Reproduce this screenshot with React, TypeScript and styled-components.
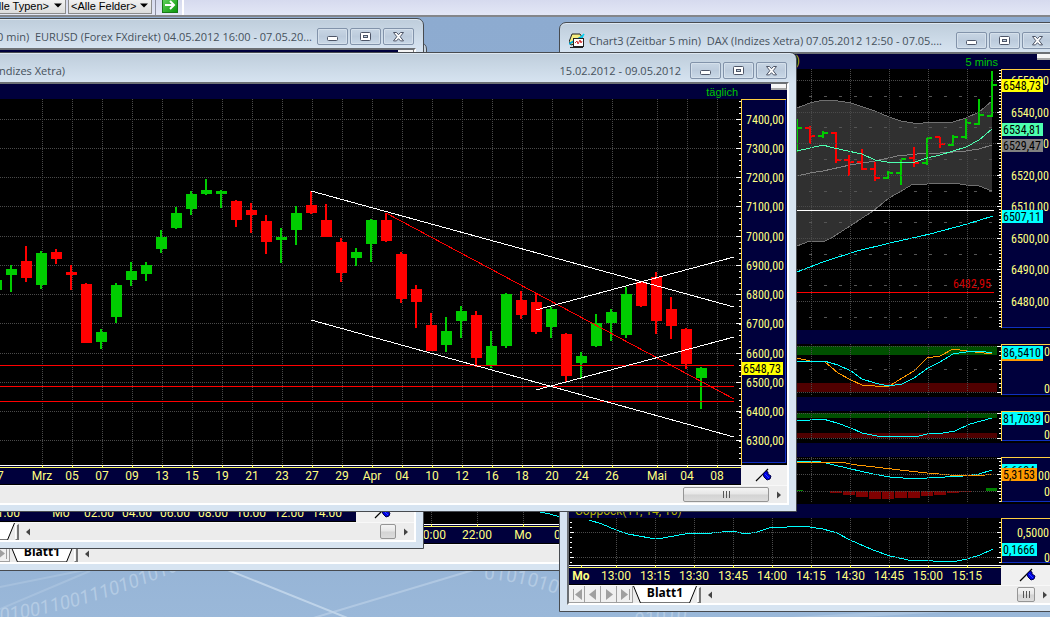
import React from 'react';
import styled, { createGlobalStyle } from 'styled-components';

const NAVY = '#00003c';
const GRID = '#4a4a4a';
const CYAN = '#00ffff';
const UP = '#00cc00';
const DOWN = '#ff0000';
const LABEL = '#ffff80';

const GlobalStyle = createGlobalStyle`
  * { box-sizing: border-box; }
  html, body { margin: 0; background: #94b2d4; }
  body, button, select { font-family: Roboto, "Liberation Sans", sans-serif; font-size: 12px; }
`;

const Page = styled.div`
  display: flex;
  flex-direction: column;
  min-height: 100vh;
  overflow: hidden;
`;

const Toolbar = styled.header`
  display: flex;
  height: 17px;
  flex: none;
  background: linear-gradient(#d6daee, #e3e7f6);
  border-bottom: 2px solid #84868a;
`;

const SelectBox = styled.label<{ $shift?: number }>`
  position: relative;
  display: block;
  height: 14px;
  width: 84px;
  margin-left: ${(p) => p.$shift ?? 2}px;
  svg { position: absolute; right: 4px; top: 3px; pointer-events: none; }
`;

const Select = styled.select`
  appearance: none;
  display: block;
  width: 100%;
  height: 14px;
  padding: 0 0 1px 2px;
  margin: 0;
  border: 1px solid #8c8c8c;
  border-top: 0;
  border-radius: 0;
  background: linear-gradient(#f2f2f2, #dcdcdc);
  color: #000;
  font: 11px/12px "Liberation Sans", sans-serif;
`;

const ToolbarEnd = styled.div`
  display: flex;
  margin-left: 3px;
  padding: 0 4px 0 6px;
  border-left: 1px solid #8c8ea0;
  border-right: 2px solid #fff;
  width: 29px;
`;

const GoButton = styled.button`
  width: 16px;
  height: 13px;
  padding: 0;
  border: 1px solid #187818;
  border-top: 0;
  background: linear-gradient(135deg, #5ed05a, #0c980c);
  svg { display: block; }
`;

const Desktop = styled.main`
  position: relative;
  flex: 1;
  overflow: hidden;
  background: linear-gradient(#8dabd0 0, #93b1d4 500px, #9ab8d9 600px);
`;

const Wallpaper = styled.svg`
  position: absolute;
  inset: 0;
  width: 100%;
  height: 100%;
`;

const Frame = styled.section<{ $x: number; $y: number; $w: number; $h: number }>`
  position: absolute;
  left: ${(p) => p.$x}px;
  top: ${(p) => p.$y}px;
  width: ${(p) => p.$w}px;
  height: ${(p) => p.$h}px;
  display: flex;
  flex-direction: column;
  padding: 0 7px 6px;
  border: 1px solid #474b50;
  border-radius: 7px 7px 0 0;
  background: linear-gradient(#becddb 0, #d7e4f1 30px);
  box-shadow: inset 0 1px 0 #dde7f0;
`;

const TitleBar = styled.div`
  display: flex;
  flex: none;
  align-items: center;
  height: 29px;
  padding: 9px 2px 3px;
  color: #46515c;
  font: 11px/17px "Open Sans", "Noto Sans", sans-serif;
  white-space: pre;
`;

const Title = styled.div<{ $end?: boolean }>`
  display: flex;
  flex: 1;
  gap: 4px;
  align-items: center;
  justify-content: ${(p) => (p.$end ? 'flex-end' : 'flex-start')};
  margin-right: 5px;
  min-width: 0;
`;

const TitleRow = styled(Title)`
  justify-content: space-between;
  margin-right: 9px;
`;

const TitleLead = styled.span`
  display: flex;
  justify-content: flex-end;
  width: 73px;
`;

const Controls = styled.div`
  display: flex;
  flex: none;
  gap: 2px;
`;

const Control = styled.button`
  display: flex;
  align-items: center;
  justify-content: center;
  width: 31px;
  height: 17px;
  padding: 0;
  border: 1px solid #8293aa;
  border-radius: 2px;
  background: linear-gradient(#c8d6e4, #bccbdc 50%, #c9d8e7);
  box-shadow: inset 0 0 0 1px #d5e0eb;
`;

const Client = styled.div`
  display: flex;
  flex: 1;
  flex-direction: column;
  min-height: 0;
  border: 2px solid;
  border-color: #6c7074 #fff #fff #6c7074;
  background: #000;
`;

const Strip = styled.div<{ $h: number }>`
  display: flex;
  flex: none;
  justify-content: space-between;
  height: ${(p) => p.$h}px;
  background: ${NAVY};
  color: #b4b400;
  font: 12px/${(p) => p.$h}px Roboto, "Liberation Sans", sans-serif;
  white-space: nowrap;
`;

const StripText = styled.span<{ $w?: number }>`
  padding-left: 6px;
  width: ${(p) => (p.$w ? `${p.$w}px` : 'auto')};
  text-align: ${(p) => (p.$w ? 'right' : 'left')};
`;

const Interval = styled.span`
  display: flex;
  margin-left: auto;
  color: #00c800;
  font: 11px/16px "Liberation Sans", sans-serif;
`;

const Corner = styled.span<{ $gap: number }>`
  width: 16px;
  height: 6px;
  margin-left: ${(p) => p.$gap}px;
  background: #f6f6f6;
  border-right: 1px solid #777;
  border-bottom: 2px solid #a8a8a8;
`;

const Row = styled.div<{ $h?: number }>`
  display: flex;
  flex: ${(p) => (p.$h ? 'none' : '1')};
  min-height: 0;
  height: ${(p) => (p.$h ? `${p.$h}px` : 'auto')};
  overflow: hidden;
  background: #000;
`;

const Canvas = styled.svg`
  display: block;
  flex: none;
  shape-rendering: crispEdges;
`;

const AxisText = styled.text`
  font-size: 12px;
  font-family: Roboto, "Liberation Sans", sans-serif;
`;

const PriceText = styled.text`
  font-size: 12px;
  font-family: "Liberation Sans Narrow", "Roboto Condensed", Roboto, sans-serif;
`;

const PinCell = styled.div`
  display: flex;
  flex: 1;
  align-items: center;
  padding-left: 14px;
  background: #f0f0f0;
`;

const PinCellWide = styled(PinCell)`
  padding-left: 18px;
`;

const BottomBar = styled.div`
  display: flex;
  flex: none;
  align-items: center;
  height: 18px;
  background: #ececec;
  border-top: 1px solid #f8f8f8;
`;

const NavGroup = styled.div`
  display: flex;
  align-self: stretch;
`;

const NavButton = styled.button`
  display: flex;
  align-items: center;
  justify-content: center;
  width: 16px;
  padding: 0;
  border: 0;
  border-right: 1px solid #a0a0a0;
  border-bottom: 1px solid #a0a0a0;
  background: #f0f0f0;
`;

const SheetTab = styled.button`
  display: flex;
  align-items: stretch;
  height: 17px;
  padding: 0;
  border: 0;
  background: none;
  font: bold 12px/14px "Open Sans", "Noto Sans", sans-serif;
  color: #000;
  svg { display: block; }
`;

const SheetName = styled.span`
  width: 48px;
  text-align: center;
  background: #fff;
  border-bottom: 1px solid #777;
`;

const Grip = styled.span`
  width: 4px;
  height: 16px;
  border: 1px solid #fff;
  border-right: 2px solid #777;
  border-bottom-color: #777;
  background: #f0f0f0;
`;

const ArrowButton = styled.button`
  display: flex;
  align-items: center;
  justify-content: center;
  width: 17px;
  height: 17px;
  padding: 0;
  border: 0;
  background: none;
`;

const Spacer = styled.span`
  flex: 1;
`;

const Thumb = styled.button<{ $w: number }>`
  display: flex;
  align-items: center;
  justify-content: center;
  width: ${(p) => p.$w}px;
  height: 15px;
  margin-right: 1px;
  padding: 0;
  border: 1px solid #959595;
  border-radius: 2px;
  background: linear-gradient(#f4f4f4, #e6e6e6 48%, #d3d3d3 52%, #dcdcdc);
`;

/* ---------- drawings ---------- */

const Pin = () => (
  <svg width="18" height="14" viewBox="0 0 18 14" aria-hidden="true">
    <path d="M1 13 L13 1" stroke="#000" strokeWidth="1.200" />
    <path d="M8 6 l3 -3 l2 1 l0 2 l3 2 l-1 3 l-3 1 l-3 -3 z" fill="#0000e0" stroke="#000048" strokeWidth="1" />
    <path d="M10 6 l4 4" stroke="#2a4cff" strokeWidth="1" />
  </svg>
);

const ChartIcon = () => (
  <svg width="16" height="16" viewBox="0 0 16 16" aria-hidden="true">
    <path d="M3 1 L11 1 L13 4 L13 8 L2 12 L0 9 Z" fill="#f4ec80" stroke="#222" />
    <path d="M0 11 L14 3" stroke="#00a8d8" strokeWidth="2" />
    <path d="M15 1 L12 5" stroke="#00d0f0" strokeWidth="1.6" />
    <rect x="4.500" y="5.500" width="10" height="8" fill="#fff" stroke="#222" />
    <path d="M6 10 l2 -2 l1 3 l2 -4 l1 3 l1 -2" stroke="#d03030" fill="none" />
    <path d="M1 14.500 h13" stroke="#222" />
  </svg>
);

const MinGlyph = () => (
  <svg width="13" height="12" viewBox="0 0 13 12" aria-hidden="true">
    <rect x="1.500" y="5.500" width="10" height="4" rx="1" fill="#fff" stroke="#4d5567" />
  </svg>
);
const MaxGlyph = () => (
  <svg width="13" height="12" viewBox="0 0 13 12" aria-hidden="true">
    <rect x="1.500" y="1.500" width="10" height="8" rx="1" fill="#fff" stroke="#4d5567" />
    <rect x="4.500" y="4.500" width="4" height="2" fill="#c3d1df" stroke="#4d5567" />
  </svg>
);
const CloseGlyph = () => (
  <svg width="13" height="12" viewBox="0 0 13 12" aria-hidden="true">
    <path d="M1.500 1.500 h3 l2 2.200 l2 -2.200 h3 l-3.300 4.200 l3.300 4.200 h-3 l-2 -2.200 l-2 2.200 h-3 l3.300 -4.200 z" fill="#fff" stroke="#4d5567" />
  </svg>
);

const WindowControls = () => (
  <Controls>
    <Control aria-label="Minimieren"><MinGlyph /></Control>
    <Control aria-label="Maximieren"><MaxGlyph /></Control>
    <Control aria-label="Schließen"><CloseGlyph /></Control>
  </Controls>
);

const NAV_ICONS = [
  'M3 1 h1 v11 h-1 z M12 1 v11 l-7 -5.500 z',
  'M10 1 v11 l-7 -5.500 z',
  'M4 1 v11 l7 -5.500 z',
  'M11 1 h1 v11 h-1 z M3 1 v11 l7 -5.500 z',
];
const NAV_NAMES = ['Erstes Blatt', 'Vorheriges Blatt', 'Nächstes Blatt', 'Letztes Blatt'];

const Arrow = ({ dir, label }: { dir: 'left' | 'right'; label: string }) => (
  <ArrowButton aria-label={label}>
    <svg width="4" height="8" viewBox="0 0 4 8" aria-hidden="true">
      <path d={dir === 'left' ? 'M4 0.500 v7 L0 4 z' : 'M0 0.500 v7 L4 4 z'} fill="#444" />
    </svg>
  </ArrowButton>
);

const ScrollEnd = ({ w, ridges }: { w: number; ridges?: boolean }) => (
  <>
    <Spacer />
    <Thumb $w={w} aria-label="Bildlauf">
      {ridges && (
        <svg width="9" height="7" aria-hidden="true">
          <path d="M1.500 0 v7 M4.500 0 v7 M7.500 0 v7" stroke="#555" />
        </svg>
      )}
    </Thumb>
    <Arrow dir="right" label="Nach rechts" />
  </>
);

const SheetBar = ({ thumb, ridges }: { thumb: number; ridges?: boolean }) => (
  <BottomBar>
    <NavGroup>
      {NAV_ICONS.map((d, i) => (
        <NavButton key={d} aria-label={NAV_NAMES[i]}>
          <svg width="14" height="13" viewBox="0 0 14 13" aria-hidden="true"><path d={d} fill="#a0a0a0" /></svg>
        </NavButton>
      ))}
    </NavGroup>
    <SheetTab>
      <svg width="8" height="17" aria-hidden="true">
        <path d="M0 0 H8 V17 Z" fill="#fff" />
        <path d="M0.500 0 L7.500 17" stroke="#000" />
      </svg>
      <SheetName>Blatt1</SheetName>
      <svg width="8" height="17" aria-hidden="true">
        <path d="M0 0 H8 L0 17 Z" fill="#fff" />
        <path d="M7.500 0 L0.500 17" stroke="#000" />
      </svg>
    </SheetTab>
    <Grip />
    <Arrow dir="left" label="Nach links" />
    <ScrollEnd w={thumb} ridges={ridges} />
  </BottomBar>
);

type TickLabel = [number, string, boolean?];

const TimeAxis = ({ x, w, ticks }: { x: number; w: number; ticks: TickLabel[] }) => (
  <Canvas width={w} height={20} viewBox={`${x} 0 ${w} 20`}>
    <rect x={x} y={0} width={w} height={19} fill={NAVY} />
    <rect x={x} y={0} width={w} height={1} fill="#fff" />
    <rect x={x} y={2} width={w} height={1} fill="#ffff60" />
    {ticks.map(([cx, text, bold]) => (
      <g key={cx}>
        <rect x={cx} y={0} width={1} height={3} fill="#ffff60" />
        <AxisText x={cx} y={15} textAnchor="middle" fill={LABEL} fontWeight={bold ? 700 : 400}>{text}</AxisText>
      </g>
    ))}
  </Canvas>
);

const Tag = ({ x, y, w, fill, text }: { x: number; y: number; w: number; fill: string; text: string }) => (
  <g>
    <rect x={x} y={y} width={w} height={13} fill={fill} />
    <PriceText x={x + 1} y={y + 11} fill="#000">{text}</PriceText>
  </g>
);

const HGrid = ({ x1, x2, ys }: { x1: number; x2: number; ys: number[] }) => (
  <path d={ys.map((y) => `M${x1} ${y + 0.5}H${x2}`).join('')} stroke={GRID} strokeDasharray="1 1" />
);
const VGrid = ({ xs, y1, y2 }: { xs: number[]; y1: number; y2: number }) => (
  <path d={xs.map((x) => `M${x + 0.5} ${y1}V${y2}`).join('')} stroke={GRID} strokeDasharray="1 1" />
);

/* ---------- daily chart ---------- */

const DAY_X = [42, 72, 102, 132, 162, 192, 222, 252, 282, 312, 342, 372, 402, 432, 462, 492, 522, 552, 582, 612, 657, 687, 717];
const DAY_NAMES = ['Mrz', '05', '07', '09', '13', '15', '19', '21', '23', '27', '29', 'Apr', '04', '10', '12', '16', '18', '20', '24', '26', 'Mai', '04', '08'];
const DAY_Y = [119, 148, 177, 206, 236, 265, 294, 323, 353, 382, 411, 440];

// [rising, body top, body bottom, wick top, wick bottom]
const CANDLES: [number, number, number, number, number][] = [
  [1, 280, 290, 280, 290], [1, 269, 275, 265, 292], [0, 261, 278, 246, 282], [1, 253, 285, 251, 289],
  [0, 252, 259, 249, 264], [0, 272, 275, 265, 290], [0, 284, 343, 283, 343], [1, 332, 342, 329, 349],
  [1, 285, 317, 283, 323], [1, 271, 280, 262, 286], [1, 265, 274, 262, 281], [1, 237, 249, 230, 253],
  [1, 213, 228, 207, 229], [1, 194, 209, 191, 215], [1, 190, 194, 179, 195], [1, 191, 194, 190, 208],
  [0, 201, 220, 200, 227], [0, 210, 215, 203, 233], [0, 221, 242, 215, 254], [1, 237, 240, 228, 263],
  [1, 213, 230, 206, 245], [0, 205, 213, 191, 214], [0, 220, 237, 204, 237], [0, 242, 273, 238, 282],
  [1, 252, 258, 248, 266], [1, 220, 244, 219, 262], [0, 220, 241, 213, 242], [0, 254, 299, 252, 303],
  [0, 289, 302, 285, 328], [0, 325, 351, 313, 351], [1, 331, 345, 317, 352], [1, 311, 321, 306, 338],
  [0, 315, 358, 311, 367], [1, 346, 365, 331, 368], [1, 294, 346, 293, 348], [0, 300, 315, 291, 319],
  [0, 302, 332, 293, 334], [1, 309, 327, 307, 338], [0, 334, 376, 333, 382], [1, 356, 363, 352, 379],
  [1, 323, 346, 314, 347], [1, 312, 323, 309, 341], [1, 294, 335, 287, 338], [0, 282, 306, 281, 307],
  [0, 277, 321, 272, 334], [0, 309, 326, 297, 339], [0, 329, 364, 328, 369], [1, 368, 378, 367, 409],
];

const DailyPlot = () => (
  <Canvas width={749} height={366} viewBox="-8 99 749 366">
    <HGrid x1={-8} x2={737} ys={DAY_Y} />
    <VGrid xs={DAY_X} y1={99} y2={465} />
    {CANDLES.map(([up, bt, bb, wt, wb], i) => (
      <g key={i} fill={up ? UP : DOWN}>
        <rect x={i * 15 - 9} y={bt} width={11} height={bb - bt} />
        <rect x={i * 15 - 5} y={wt} width={2} height={wb - wt} />
      </g>
    ))}
    <path d="M-8 365.500H734M-8 386.500H734M-8 401.500H734" stroke="#ff0000" />
    <path d="M386 213L734 399" stroke="#ff0000" />
    <path d="M311 191L734 307M311 320L734 437M536 310L734 257M536 390L734 337" stroke="#fff" />
    <path d={DAY_Y.map((y) => `M736 ${y + 0.5}H741`).join('')} stroke="#fff" />
    <path d={Array.from({ length: 62 }, (_, i) => `M739 ${Math.round(101 + i * 5.86) + 0.5}H741`).join('')} stroke="#fff" />
  </Canvas>
);

const DailyScale = () => (
  <Canvas width={46} height={366} viewBox="741 99 46 366">
    <rect x={741} y={99} width={46} height={364} fill={NAVY} />
    <rect x={785} y={99} width={1} height={364} fill="#1030c0" />
    <rect x={741} y={462} width={45} height={1} fill="#1030c0" />
    <rect x={741} y={99} width={1} height={366} fill="#ffd040" />
    <rect x={741} y={99} width={45} height={1} fill="#ffd040" />
    {DAY_Y.map((y, i) => (
      <PriceText key={y} x={784} y={y + 5} textAnchor="end" fill={LABEL}>{`${7400 - i * 100},00`}</PriceText>
    ))}
    <Tag x={742} y={362} w={41} fill="#ffff00" text="6548,73" />
  </Canvas>
);

/* ---------- five-minute chart ---------- */

const M5_X = [616, 655, 694, 733, 772, 811, 850, 889, 928, 967];
const M5_Y = [80, 112, 143, 175, 206, 238, 269, 301];
const M5_HALF = [96, 127, 159, 191, 222, 254, 285, 317];

// [rising, x, high, low, open, close]
const BARS: [number, number, number, number, number, number][] = [
  [1, 797, 119, 152, 128, 128], [0, 810, 126, 144, 128, 136], [1, 823, 131, 138, 136, 133], [0, 836, 132, 163, 133, 160],
  [0, 849, 155, 176, 160, 162], [0, 862, 149, 170, 162, 169], [0, 875, 162, 181, 169, 178], [1, 888, 171, 179, 178, 173],
  [1, 901, 159, 185, 173, 159], [0, 914, 147, 167, 158, 163], [1, 927, 138, 165, 163, 138], [0, 940, 137, 148, 137, 144],
  [1, 953, 135, 146, 145, 137], [1, 966, 119, 139, 137, 123], [1, 979, 99, 125, 124, 115], [1, 992, 71, 117, 116, 85],
];

type PanelProps = {
  y1: number;
  y2: number;
  axisEnd: number;
  rows: number[];
  halves?: number[];
  ticks: number;
  children?: React.ReactNode;
  scale?: React.ReactNode;
};

const Panel = ({ y1, y2, axisEnd, rows, halves = [], ticks, children, scale }: PanelProps) => {
  const minor: number[] = [];
  for (let y = rows[rows.length - 1]; y > y1; y -= ticks) minor.push(Math.round(y));
  for (let y = rows[rows.length - 1]; y < axisEnd; y += ticks) minor.push(Math.round(y));
  return (
    <Row $h={y2 - y1}>
      <Canvas width={432} height={y2 - y1} viewBox={`569 ${y1} 432 ${y2 - y1}`}>
        {children}
        <HGrid x1={573} x2={997} ys={rows} />
        <VGrid xs={M5_X} y1={y1} y2={axisEnd} />
        <path d={halves.map((y) => `M809 ${y + 0.5}H994`).join('')} stroke="#555" strokeDasharray="3 12" />
        <path d={rows.map((y) => `M997 ${y + 0.5}H1001M570 ${y + 0.5}H574`).join('')} stroke="#fff" />
        <path d={minor.map((y) => `M999 ${y + 0.5}H1001M570 ${y + 0.5}H572`).join('')} stroke="#fff" />
      </Canvas>
      <Canvas width={52} height={y2 - y1} viewBox={`1001 ${y1} 52 ${y2 - y1}`}>
        <rect x={1001} y={y1} width={52} height={axisEnd - y1} fill={NAVY} />
        <rect x={1001} y={axisEnd - 1} width={52} height={1} fill="#1030c0" />
        <rect x={1001} y={y1} width={1} height={axisEnd - y1} fill="#ffd040" />
        <rect x={1001} y={y1} width={52} height={1} fill="#ffd040" />
        {scale}
      </Canvas>
    </Row>
  );
};

const Curve = ({ pts, color }: { pts: string; color: string }) => (
  <polyline points={pts} fill="none" stroke={color} />
);

const Num = ({ x, y, children }: { x: number; y: number; children: string }) => (
  <PriceText x={x} y={y + 5} fill={LABEL}>{children}</PriceText>
);

const UPPER = '797,108 810,103 823,100 832,100 851,103 875,111 889,117 901,121 913,123 923,123 927,122 940,123 953,122 966,118 979,112 992,101';
const LOWER = '797,246 810,241 823,242 833,237 850,226 873,211 889,198 903,190 913,184 927,184 953,183 966,185 979,186 992,191';

const HISTO: [number, number][] = [
  [830, 2], [843, 4], [856, 6], [869, 8], [882, 8], [895, 7], [908, 7], [921, 5], [934, 4], [947, 2], [960, 1],
];

const FiveMinuteChart = () => (
  <>
    <Panel
      y1={69} y2={330} axisEnd={328} rows={M5_Y} halves={M5_HALF} ticks={3.17}
      scale={
        <>
          {M5_Y.map((y, i) => <Num key={y} x={1011} y={y}>{`${6550 - i * 10},00`}</Num>)}
          <Tag x={1002} y={79} w={41} fill="#ffff00" text="6548,73" />
          <Tag x={1002} y={123} w={41} fill="#4dffb0" text="6534,81" />
          <Tag x={1002} y={139} w={41} fill="#808080" text="6529,47" />
          <Tag x={1002} y={210} w={41} fill={CYAN} text="6507,11" />
        </>
      }
    >
      <polygon points={`${UPPER} ${LOWER.split(' ').reverse().join(' ')}`} fill="#303030" />
      <Curve pts={UPPER} color="#707070" />
      <Curve pts={LOWER} color="#707070" />
      <Curve pts="797,176 810,173 823,171 850,165 875,161 897,156 927,153 940,153 966,151 979,149 992,145" color="#808080" />
      {BARS.map(([up, x, hi, lo, open, close]) => (
        <g key={x} fill={up ? UP : DOWN}>
          <rect x={x - 1} y={hi} width={2} height={lo - hi} />
          <rect x={x - 5} y={open - 1} width={5} height={2} />
          <rect x={x} y={close - 1} width={5} height={2} />
        </g>
      ))}
      <Curve pts="797,151 810,148 823,145 830,147 843,150 862,154 875,160 887,162 915,162 927,158 940,155 953,151 966,147 979,140 992,129" color="#4dffb0" />
      <path d="M573 210.500H994" stroke="#fff" />
      <Curve pts="797,272 823,262 857,251 890,243 930,234 967,224 993,216" color={CYAN} />
      <path d="M573 292.500H994" stroke="#ff0000" />
      <PriceText x={953} y={288} fill="#d80000">6482,95</PriceText>
    </Panel>
    <Strip $h={14} />
    <Panel
      y1={344} y2={397} axisEnd={395} rows={[346, 392]} halves={[369]} ticks={4.6}
      scale={
        <>
          <Num x={1044} y={351}>0</Num>
          <Num x={1044} y={388}>0</Num>
          <rect x={1002} y={358} width={41} height={3} fill="#ff9900" />
          <Tag x={1002} y={346} w={41} fill={CYAN} text="86,5410" />
        </>
      }
    >
      <rect x={573} y={346} width={424} height={9} fill="#005000" />
      <rect x={573} y={383} width={424} height={9} fill="#500000" />
      <Curve pts="797,358 810,361 824,361 838,373 851,380 862,385 888,387 902,378 914,371 927,358 940,356 953,349 967,351 992,354" color="#ff9900" />
      <Curve pts="797,362 807,361 824,361 838,365 851,371 862,379 875,383 888,386 902,384 914,378 928,368 940,362 953,354 966,352 979,351 992,353" color={CYAN} />
    </Panel>
    <Strip $h={14} />
    <Panel
      y1={411} y2={443} axisEnd={441} rows={[413, 438]} ticks={5}
      scale={
        <>
          <Num x={1044} y={418}>0</Num>
          <Num x={1044} y={434}>0</Num>
          <Tag x={1002} y={412} w={41} fill={CYAN} text="81,7039" />
        </>
      }
    >
      <rect x={573} y={413} width={424} height={5} fill="#005000" />
      <rect x={573} y={433} width={424} height={5} fill="#500000" />
      <Curve pts="797,421 810,420 823,419 837,423 851,428 862,433 877,436 889,437 902,436 915,437 927,434 943,433 955,431 970,424 992,418" color={CYAN} />
    </Panel>
    <Strip $h={14} />
    <Panel
      y1={457} y2={504} axisEnd={502} rows={[458, 474, 491]} ticks={3.3}
      scale={
        <>
          <Num x={1038} y={475}>00</Num>
          <Num x={1044} y={491}>0</Num>
          <Tag x={1002} y={464} w={35} fill={CYAN} text="6,6604" />
          <Tag x={1002} y={468} w={35} fill="#ff9900" text="5,3153" />
        </>
      }
    >
      {HISTO.map(([x, h]) => <rect key={x} x={x} y={491} width={12} height={h} fill="#800000" />)}
      <rect x={986} y={488} width={11} height={3} fill="#008000" />
      <rect x={797} y={490} width={6} height={1} fill="#008000" />
      <Curve pts="797,461 817,461 830,464 851,469 873,474 890,477 915,479 927,478 963,476 979,474 992,470" color={CYAN} />
      <Curve pts="797,462 840,462 857,465 875,467 900,470 927,473 950,475 979,476 992,474" color="#ff9900" />
    </Panel>
    <Strip $h={14}><StripText>Coppock(11, 14, 16)</StripText></Strip>
    <Panel
      y1={518} y2={565} axisEnd={563} rows={[532, 557]} ticks={5}
      scale={
        <>
          <Num x={1017} y={532}>0,5000</Num>
          <Num x={1044} y={557}>0</Num>
          <Tag x={1002} y={543} w={35} fill={CYAN} text="0,1666" />
        </>
      }
    >
      <Curve pts="589,520 602,524 616,530 628,534 650,538 663,538 690,533 712,533 732,531 746,534 757,532 772,527 787,527 803,526 823,529 837,533 850,540 873,550 890,556 913,561 925,560 933,561 957,561 967,559 980,555 993,549" color={CYAN} />
    </Panel>
  </>
);

const M5_TICKS: TickLabel[] = [
  [581, 'Mo', true], [616, '13:00'], [655, '13:15'], [694, '13:30'], [733, '13:45'], [772, '14:00'],
  [811, '14:15'], [850, '14:30'], [889, '14:45'], [928, '15:00'], [967, '15:15'],
];
const HOUR_TICKS: TickLabel[] = [
  [5, '21:00'], [61, 'Mo'], [99, '02:00'], [137, '04:00'], [175, '06:00'], [213, '08:00'], [251, '10:00'], [289, '12:00'], [327, '14:00'],
];
const BACK_TICKS: TickLabel[] = [[431, '20:00'], [477, '22:00'], [523, 'Mo'], [569, '02:00']];

export default function App() {
  return (
    <Page>
      <GlobalStyle />
      <Toolbar>
        <SelectBox $shift={-18}>
          <Select aria-label="Typen"><option>&lt;Alle Typen&gt;</option></Select>
          <svg width="8" height="5" aria-hidden="true"><path d="M0 0.500 H8 L4 4.500 Z" /></svg>
        </SelectBox>
        <SelectBox>
          <Select aria-label="Felder"><option>&lt;Alle Felder&gt;</option></Select>
          <svg width="8" height="5" aria-hidden="true"><path d="M0 0.500 H8 L4 4.500 Z" /></svg>
        </SelectBox>
        <ToolbarEnd>
          <GoButton aria-label="Los">
            <svg width="14" height="12" viewBox="0 0 14 12" aria-hidden="true">
              <path d="M2 5 H11 M7 1 L11 5 L7 9" fill="none" stroke="#fff" strokeWidth="2" />
            </svg>
          </GoButton>
        </ToolbarEnd>
      </Toolbar>

      <Desktop>
        <Wallpaper aria-hidden="true">
          <defs>
            <path id="arc-left" d="M-20 608 Q90 594 190 548" />
            <path id="arc-mid" d="M484 562 Q530 564 590 590" />
            <path id="arc-right" d="M636 610 Q670 602 720 604" />
          </defs>
          <path d="M228 553 L350 602" stroke="#c8dbee" strokeWidth="2" opacity="0.8" />
          <path d="M480 551 L300 605" stroke="#c0d4ea" strokeWidth="2" opacity="0.6" />
          <path d="M-10 572 L100 550 M0 592 L90 554" stroke="#b4cbe4" strokeWidth="2" opacity="0.5" />
          <path d="M740 605 L1000 590" stroke="#c0d4ea" strokeWidth="4" opacity="0.4" />
          <g fill="#c6d9ec" opacity="0.6" fontFamily="Roboto, sans-serif" fontSize="19">
            <text fontStyle="italic"><textPath href="#arc-left">01010011001110101010</textPath></text>
            <text><textPath href="#arc-mid">01010101</textPath></text>
            <text fontStyle="italic"><textPath href="#arc-right">01010</textPath></text>
          </g>
        </Wallpaper>

        <Frame $x={-64} $y={73} $w={704} $h={481}>
          <TitleBar><Title /><WindowControls /></TitleBar>
          <Client>
            <Row>
              <Canvas width={624} height={404} viewBox="-54 121 624 404">
                <VGrid xs={[431, 477, 523]} y1={121} y2={525} />
                <Curve pts="540,511 550,513 560,516" color={CYAN} />
              </Canvas>
            </Row>
            <Row $h={20}>
              <TimeAxis x={-54} w={640} ticks={BACK_TICKS} />
              <PinCell><Pin /></PinCell>
            </Row>
            <SheetBar thumb={16} />
          </Client>
        </Frame>

        <Frame $x={200} $y={25} $w={227} $h={300} />

        <Frame $x={-123} $y={1} $w={547} $h={531}>
          <TitleBar>
            <Title $end>{'(Zeitbar 60 min)  EURUSD (Forex FXdirekt) 04.05.2012 16:00 - 07.05.20...'}</Title>
            <WindowControls />
          </TitleBar>
          <Client>
            <Strip $h={15}><Interval><Corner $gap={33} /></Interval></Strip>
            <Row />
            <Row $h={20}>
              <TimeAxis x={-113} w={469} ticks={HOUR_TICKS} />
              <PinCellWide><Pin /></PinCellWide>
            </Row>
            <SheetBar thumb={16} />
          </Client>
        </Frame>

        <Frame $x={559} $y={5} $w={504} $h={590}>
          <TitleBar>
            <Title>
              <ChartIcon />
              <span>{'Chart3 (Zeitbar 5 min)  DAX (Indizes Xetra) 07.05.2012 12:50 - 07.05....'}</span>
            </Title>
            <WindowControls />
          </TitleBar>
          <Client>
            <Strip $h={15}>
              <StripText $w={231}>)</StripText>
              <Interval>5 mins<Corner $gap={39} /></Interval>
            </Strip>
            <FiveMinuteChart />
            <Row $h={20}>
              <TimeAxis x={569} w={432} ticks={M5_TICKS} />
              <PinCellWide><Pin /></PinCellWide>
            </Row>
            <SheetBar thumb={18} ridges />
          </Client>
        </Frame>

        <Frame $x={-18} $y={35} $w={815} $h={460}>
          <TitleBar>
            <TitleRow>
              <TitleLead>(Indizes Xetra)</TitleLead>
              <span>15.02.2012 - 09.05.2012</span>
            </TitleRow>
            <WindowControls />
          </TitleBar>
          <Client>
            <Strip $h={15}>
              <Interval>täglich<Corner $gap={33} /></Interval>
            </Strip>
            <Row>
              <DailyPlot />
              <DailyScale />
            </Row>
            <Row $h={20}>
              <TimeAxis x={-8} w={749} ticks={[[-3, '27'], ...DAY_X.map((x, i): TickLabel => [x, DAY_NAMES[i]])]} />
              <PinCell><Pin /></PinCell>
            </Row>
            <BottomBar>
              <ScrollEnd w={86} ridges />
            </BottomBar>
          </Client>
        </Frame>
      </Desktop>
    </Page>
  );
}
